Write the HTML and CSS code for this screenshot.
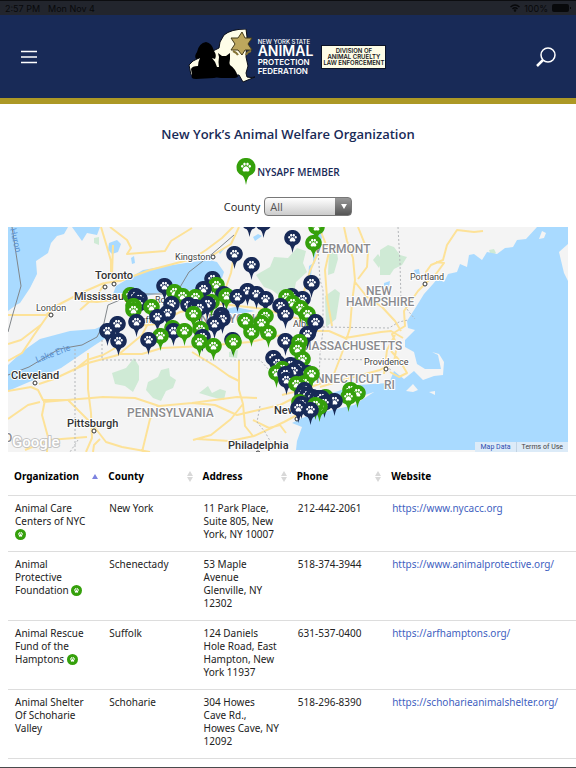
FILE: index.html
```html
<!DOCTYPE html>
<html lang="en">
<head>
    <meta charset="UTF-8">
    <meta name="viewport" content="width=device-width, initial-scale=1.0">
    <title>New York's Animal Welfare Organization</title>
    <link rel="stylesheet" href="styles.css">
</head>
<body>
    <!-- shared shapes -->
    <svg class="sprite" aria-hidden="true">
        <symbol id="paw" viewBox="0 0 12 11">
            <ellipse cx="1.7" cy="4.6" rx="1.3" ry="1.7"/>
            <ellipse cx="4.3" cy="2" rx="1.4" ry="1.9"/>
            <ellipse cx="7.7" cy="2" rx="1.4" ry="1.9"/>
            <ellipse cx="10.3" cy="4.6" rx="1.3" ry="1.7"/>
            <path d="M6 4.6C4 4.6 2.2 7.2 2.2 9c0 1.500 2 1.700 3.800 1.100C7.800 10.700 9.800 10.500 9.800 9 9.800 7.200 8 4.600 6 4.600z"/>
        </symbol>
        <symbol id="pin" viewBox="0 0 18 26">
            <path d="M9 0a8.500 8.500 0 0 1 3 16.600Q10 19 9 25Q8 19 6 16.600A8.500 8.500 0 0 1 9 0z"/>
            <use href="#paw" x="4" y="4" width="10" height="9" fill="#fff"/>
        </symbol>
        <symbol id="member" viewBox="0 0 12 12">
            <circle cx="6" cy="6" r="6" fill="#35a00b"/>
            <use href="#paw" x="3" y="3" width="6" height="6" fill="#fff"/>
        </symbol>
    </svg>

    <div class="screen">
        <div class="status-bar">
            <span>2:57 PM</span>
            <span>Mon Nov 4</span>
            <span class="status-right">
                <svg width="10" height="8" viewBox="0 0 20 16" fill="none" stroke="#08090b" stroke-width="3">
                    <path d="M1 6Q10-2 19 6M5 10Q10 5 15 10"/>
                    <circle cx="10" cy="13" r="1"/>
                </svg>
                100%
                <svg width="19" height="8" viewBox="0 0 19 8" fill="#08090b">
                    <rect width="17" height="8" rx="2"/>
                    <rect x="18" y="3" width="1" height="2"/>
                </svg>
            </span>
        </div>

        <header class="header">
            <button type="button" class="icon-btn" aria-label="Menu">
                <svg width="18" height="14" viewBox="0 0 18 14" stroke="#fff" stroke-width="1.700">
                    <path d="M1 1.500h16M1 7h16M1 12.500h16"/>
                </svg>
            </button>

            <a href="#" class="logo">
                <svg class="logo-art" width="67" height="55" viewBox="0 0 67 55">
                    <path d="M1 36L5 32 31 19 32 13 36 6Q43 0 58 0L59 8 58 28 60 37 58 44 59 48Q63 49 67 48L55 53 51 46 3 46z" fill="#fefde8" stroke="#0a0d18" stroke-width="1"/>
                    <path d="M8 30Q6 27 9 23 11 14 18 13 24 14 26 22 29 26 27 30L24 29Q28 33 29 38L31 38Q30 33 31 28L30 24 34 27 38 27 42 24 42 30Q41 34 42 36 48 40 50 48L47 49 33 49Q28 48 26 49L8 50Q2 50 4 46L3 40Q4 37 10 37 10 33 12 29z" fill="#000"/>
                    <path d="M54 3L57 9 64 9 60 15 64 21 57 21 54 26 50 21 43 21 47 15 43 9 50 9z" fill="#bda75d" stroke="#453c1b" stroke-width="1"/>
                    <path d="M45 22q4 2 5 4M63 22q-4 1-5 4" fill="none" stroke="#857436" stroke-width="2"/>
                </svg>
                <span class="logo-name">
                    <span class="name-top">NEW YORK STATE</span>
                    <span class="name-big">ANIMAL</span>
                    <span class="name-mid">PROTECTION</span>
                    <span class="name-end">FEDERATION</span>
                </span>
                <span class="logo-box">DIVISION OF<br>ANIMAL CRUELTY<br>LAW ENFORCEMENT</span>
            </a>

            <button type="button" class="icon-btn" aria-label="Search">
                <svg width="20" height="20" viewBox="0 0 20 20" fill="none" stroke="#fff">
                    <circle cx="12" cy="8" r="7" stroke-width="1.500"/>
                    <path d="M7 13L1 19" stroke-width="2.500"/>
                </svg>
            </button>
        </header>

        <main>
            <h1>New York’s Animal Welfare Organization</h1>

            <div class="legend">
                <svg width="20" height="28" viewBox="0 0 18 26" fill="#35a00b"><use href="#pin" width="18" height="26"/></svg>
                <span>NYSAPF MEMBER</span>
            </div>

            <form class="filter">
                <label for="county">County</label>
                <span class="select-wrap">
                    <select id="county">
                        <option>All</option>
                        <option>New York</option>
                        <option>Schenectady</option>
                        <option>Schoharie</option>
                        <option>Suffolk</option>
                    </select>
                </span>
            </form>

            <div class="map">
                <svg viewBox="8 227 560 225" role="img" aria-label="Map of organizations">
                    <rect x="8" y="227" width="560" height="225" fill="#f4f4f4"/>

                    <!-- parks -->
                    <g fill="#cfead5">
                        <path d="M112 373l14-5 8-10 5 8v14l-6 12-8-6-10-2z"/>
                        <path d="M148 382l10-5 3-7 8-2 1 8 6 4-3 8-7 3-5 10-8-3-7-8z"/>
                        <path d="M256 275l14-8 4-10 14 1 9-10 9 3-3 12 4 9-11 10-2 11-13 4-9-7-8-3z"/>
                        <path d="M329 250l7-5 2 14-4 14-6 2zM325 296l10-7 5 4-4 26-10 8zM373 260l5-6 4 6-3 8z"/>
                        <path d="M380 250l8-5 6 2 6 8 7 2-5 8-8 4-4 6h-10z"/>
                        <path d="M94 238l5-1v8l-5-2zM199 393l9-7 4 7 8-4 6 2-2 9-12-3zM229 352l9-2-1 8-8-1zM489 250l5-1 2 4-5 3z"/>
                    </g>

                    <!-- water -->
                    <g fill="#a9daff">
                        <path d="M8 227h60l-4 7-7 2-6 7-3 10-12 8 1 13-7 14-10 15-4 2-8 6z"/>
                        <path d="M72 227l10 14 5-8 10 2 3-8zM109 243l8-3 4 4-3 8-6 2-4-4zM131 258l3-2 1 7-3 1z"/>
                        <path d="M113 294l3-8 15-9 12-7 23-4 26-4 17-2 8 2 7 10-2 6-10-1-9 13-37 1-23 6-21 4z"/>
                        <path d="M8 365l15-14 17-12 30-8 25-2 16-7 5 5-7 9-14 9-34 23-25 11-28 12z"/>
                        <path d="M537 227l-11 12-9 1-4 7-8 1-8 6-10-2-5 8-8-6-5 1-2 12-7-3-3 8-9 2-4 8-7-3-4 5-9 10-8 13-9 14 1 7 7 2-10 10v7l9 5 3 12 8 5h16l-3-14-6-3 7 2 5 8-1 13-9 1-11 4-9-9-10 8-10-8-5 12-32 2-25 8-10 10-18 8 40-9 30-10-20 13-39 9-13 4-10 5 10 4-5 14-1 9h275V227z"/>
                        <path d="M312 227h12l-3 15-5 6-1 16-2-2 1-20zM309 266l3-2-1 14-3 1zM222 310l13-3 20 4-16 3-12-1zM253 237l5-3 4 2-7 5zM218 251l7-3-5 6zM384 283l6-2-1 6-5-1zM414 270l5-1 1 6-4 1z"/>
                    </g>
                    <path d="M406 391l7-7 5 6-5 2zM429 392l6-1v4zM559 252l9-8v37l-4-8zM539 239l3-8 4 2-2 5z" fill="#f4f4f4"/>

                    <!-- roads -->
                    <g class="road-edge">
                        <path d="M101 227l6 20 4 14v17l9 3 30-11 42-11 14-9 16-12 12-12M80 310l18-16 7-11 14-2M8 315h38l12-10 23-12 23-10M81 301l16 1 16-2M48 315l-14 20-12 18-14 8M42 324l-21 16-13 4M113 245l-1 30"/>
                        <path d="M110 227l17 13 4 8-4 6 38-3 6-10 21-13M213 255l18-11 8-17M234 255l-3 18-5 14-4 14M138 326l18-2 24-12 42-8 42 5 35 10 16 4M150 320l-8 15-24 20-30 8-34 16-15 5M117 347l-14 8-16 5-14 11M88 353v36l3 24 1 25-6 14M120 354h22l20-6 42-2 46-4 36-8M318 253l-8 18-7 24 2 31 1 16-3 22-4 28"/>
                        <path d="M8 391l23-4 7 3 5 10h25l10 10 14 14 14 18 16 5 28 5M45 400l-3 15 6 22-1 15M43 402l60-5 32 1 24 8 33-3 45-6 20 1M192 403l23 2 22 10 17-4 26-6 24-12M8 419l20-14 12-3M87 437l-38 3-24 10M100 439l-6 6-1 7M142 452l8-33 8-13M193 440l18-5 20-16 12-15M197 439l33 2 24-5 30-14 15-8M239 360v30l4 14 2 22 8 10M192 352l23 14 14 10 10 5M253 420l16 8 11-3 6 8"/>
                        <path d="M319 227l10 25-4 18 2 28 5 28M344 227l3 14 6 17 2 22-3 22-2 26-8 25-10 26-26 10-24 6M358 227l10 25-1 15-9 12M355 282l12 15 15 10 13 14 6 10M307 331h22l16 7 36-6 10-1 12 7M320 387l30-9 30-8 14-8 3-17-5-11 13-8-1-15 14-20 10-10-2-9 5-7 12-5 4-15 10-15 17 2 9-1M436 262l8 1-8 11-9 8M384 374l3-24 8-15M391 351l9 10 7 12-8 4-9-5"/>
                    </g>

                    <!-- borders -->
                    <path d="M12 227l9 59-9 31-4 15M8 375l21-8 30-18 23-4 15-8 7-14 4-18 26-11h42l13-22 23-18 22-19" fill="none" stroke="#81868a" stroke-width="1"/>
                    <path d="M75 349v103M102 340v20h158l10 11 23 16 17 10M318 250l2 30 3 10v40l-3 24-1 29M398 227l2 36 1 37 8 12 6 7M323 327l66 1 10-6 9-2M320 359l58 1 13 10M260 406l-3 16 8 10 8 14M78 440l-8 12" fill="none" stroke="#b4b7ba" stroke-width="1" stroke-dasharray="2 2"/>

                    <!-- place names -->
                    <g class="water-name">
                        <text x="10" y="229" transform="rotate(77 10 229)">Huron</text>
                        <text x="37" y="363" transform="rotate(-21 37 363)">Lake Erie</text>
                    </g>
                    <g class="state-name">
                        <text x="314" y="253">VERMONT</text>
                        <text x="366" y="295">NEW</text>
                        <text x="346" y="306">HAMPSHIRE</text>
                        <text x="301" y="350">MASSACHUSETTS</text>
                        <text x="300" y="383">CONNECTICUT</text>
                        <text x="384" y="389">RI</text>
                        <text x="200" y="323">NEW YORK</text>
                        <text x="127" y="417">PENNSYLVANIA</text>
                    </g>
                    <g class="town-name">
                        <text x="36" y="311">London</text>
                        <text x="175" y="260">Kingston</text>
                        <text x="410" y="280">Portland</text>
                        <text x="364" y="365">Providence</text>
                        <text x="293" y="327">Albany</text>
                        <text x="155" y="303">Rochester</text>
                        <text x="135" y="323">Buffalo</text>
                    </g>
                    <g class="city-name">
                        <text x="95" y="279">Toronto</text>
                        <text x="74" y="300">Mississauga</text>
                        <text x="11" y="379">Cleveland</text>
                        <text x="67" y="427">Pittsburgh</text>
                        <text x="228" y="449">Philadelphia</text>
                        <text x="274" y="414">New York</text>
                        <text x="4" y="442" class="state-name">O</text>
                    </g>
                    <g class="dot">
                        <circle cx="114" cy="284" r="2"/>
                        <circle cx="105" cy="287" r="2"/>
                        <circle cx="51" cy="315" r="2"/>
                        <circle cx="213" cy="257" r="2"/>
                        <circle cx="425" cy="284" r="2"/>
                        <circle cx="386" cy="369" r="2"/>
                        <circle cx="35" cy="383" r="2"/>
                        <circle cx="94" cy="431" r="2"/>
                        <circle cx="297" cy="419" r="2"/>
                        <circle cx="258" cy="453" r="2"/>
                    </g>

                    <g id="pins"></g>
                    <text x="12" y="447" class="google">Google</text>
                </svg>
                <div class="map-links">
                    <a href="#" class="map-data">Map Data</a>
                    <a href="#">Terms of Use</a>
                </div>
            </div>

            <table>
                <colgroup>
                    <col class="col"><col class="col"><col class="col"><col class="col"><col>
                </colgroup>
                <thead>
                    <tr>
                        <th><div class="th">Organization <span class="sort asc"></span></div></th>
                        <th><div class="th">County <span class="sort"></span></div></th>
                        <th><div class="th">Address <span class="sort"></span></div></th>
                        <th><div class="th">Phone <span class="sort"></span></div></th>
                        <th><div class="th">Website</div></th>
                    </tr>
                </thead>
                <tbody>
                    <tr>
                        <td>Animal Care Centers of NYC <svg class="member"><use href="#member"/></svg></td>
                        <td>New York</td>
                        <td>11 Park Place, Suite 805, New York, NY 10007</td>
                        <td>212-442-2061</td>
                        <td><a href="https://www.nycacc.org">https://www.nycacc.org</a></td>
                    </tr>
                    <tr>
                        <td>Animal Protective Foundation <svg class="member"><use href="#member"/></svg></td>
                        <td>Schenectady</td>
                        <td>53 Maple Avenue<br>Glenville, NY 12302</td>
                        <td>518-374-3944</td>
                        <td><a href="https://www.animalprotective.org/">https://www.animalprotective.org/</a></td>
                    </tr>
                    <tr>
                        <td>Animal Rescue Fund of the Hamptons <svg class="member"><use href="#member"/></svg></td>
                        <td>Suffolk</td>
                        <td>124 Daniels<br>Hole Road, East Hampton, New York 11937</td>
                        <td>631-537-0400</td>
                        <td><a href="https://arfhamptons.org/">https://arfhamptons.org/</a></td>
                    </tr>
                    <tr>
                        <td>Animal Shelter Of Schoharie Valley</td>
                        <td>Schoharie</td>
                        <td>304 Howes<br>Cave Rd.,<br>Howes Cave, NY 12092</td>
                        <td>518-296-8390</td>
                        <td><a href="https://schoharieanimalshelter.org/">https://schoharieanimalshelter.org/</a></td>
                    </tr>
                    <tr>
                        <td>Animal Welfare</td>
                        <td>Westchester</td>
                        <td>110 Meadow</td>
                        <td>914-243-0024</td>
                        <td><a href="#">https://www.animalwelfare.org/</a></td>
                    </tr>
                </tbody>
            </table>
        </main>
    </div>

    <script>
        // [x, y, type] head of each pin, n = organization, g = NYSAPF member
        const pins = [
            [249, 222, 'n'], [263, 223, 'n'], [316, 227, 'g'], [292, 238, 'n'], [313, 243, 'g'],
            [234, 254, 'n'], [251, 265, 'n'], [212, 279, 'n'], [311, 283, 'n'], [216, 285, 'g'],
            [164, 286, 'n'], [203, 289, 'n'], [247, 291, 'n'], [174, 292, 'g'], [223, 294, 'n'],
            [256, 294, 'n'], [130, 295, 'g'], [135, 296, 'n'], [182, 296, 'g'], [291, 296, 'n'],
            [226, 296, 'g'], [237, 297, 'n'], [195, 297, 'g'], [286, 297, 'g'], [139, 299, 'n'],
            [265, 299, 'n'], [302, 299, 'n'], [211, 302, 'g'], [292, 303, 'g'], [138, 304, 'n'],
            [171, 304, 'n'], [188, 305, 'n'], [207, 304, 'n'], [133, 306, 'g'], [280, 306, 'n'],
            [151, 307, 'g'], [195, 307, 'n'], [199, 308, 'n'], [300, 308, 'g'], [133, 310, 'g'],
            [167, 313, 'n'], [193, 314, 'g'], [285, 314, 'n'], [307, 314, 'g'], [221, 315, 'n'],
            [265, 316, 'g'], [157, 317, 'n'], [222, 319, 'n'], [245, 321, 'g'], [136, 322, 'n'],
            [315, 322, 'n'], [261, 323, 'g'], [117, 324, 'n'], [214, 324, 'n'], [172, 328, 'g'],
            [200, 329, 'g'], [107, 331, 'n'], [173, 331, 'n'], [184, 331, 'g'], [251, 332, 'g'],
            [268, 333, 'g'], [307, 334, 'n'], [160, 336, 'g'], [202, 337, 'n'], [148, 340, 'n'],
            [232, 340, 'n'], [285, 341, 'n'], [118, 341, 'n'], [199, 342, 'g'], [233, 342, 'g'],
            [299, 342, 'g'], [213, 346, 'g'], [297, 349, 'g'], [273, 358, 'n'], [302, 359, 'g'],
            [277, 363, 'n'], [290, 365, 'n'], [297, 368, 'n'], [282, 369, 'g'], [293, 371, 'n'],
            [276, 373, 'g'], [307, 373, 'n'], [285, 374, 'n'], [311, 374, 'g'], [286, 380, 'n'],
            [304, 383, 'g'], [296, 384, 'g'], [304, 390, 'n'], [350, 390, 'g'], [357, 393, 'g'],
            [302, 394, 'n'], [307, 395, 'n'], [312, 397, 'n'], [317, 398, 'n'], [325, 397, 'g'],
            [321, 398, 'n'], [348, 397, 'g'], [334, 401, 'n'], [299, 402, 'g'], [324, 403, 'n'],
            [301, 404, 'n'], [319, 407, 'g'], [315, 405, 'g'], [298, 408, 'n'], [310, 410, 'n']
        ];

        const layer = document.getElementById('pins');
        pins.forEach(([x, y, type]) => {
            const pin = document.createElementNS('http://www.w3.org/2000/svg', 'use');
            pin.setAttribute('href', '#pin');
            pin.setAttribute('x', x - 8);
            pin.setAttribute('y', y - 8);
            pin.setAttribute('width', 17);
            pin.setAttribute('height', 24);
            pin.setAttribute('class', type === 'g' ? 'pin-member' : 'pin-org');
            layer.appendChild(pin);
        });
    </script>
</body>
</html>
```
FILE: styles.css
```css
* {
    box-sizing: border-box;
}
body {
    margin: 0;
    font-family: "Open Sans", sans-serif;
    font-size: 10px;
    line-height: 13px;
    color: #222;
    background: #fff;
}
.sprite {
    position: absolute;
    width: 0;
    height: 0;
}
.screen {
    height: 100vh;
    overflow: hidden;
    border-bottom: 1px solid #4a4a4c;
}

/* status bar */
.status-bar {
    display: flex;
    align-items: center;
    gap: 8px;
    height: 15px;
    padding: 0 5px;
    border-top: 1px solid #0c0d10;
    background: #22252d;
    color: #08090b;
    font-family: Inter, sans-serif;
    font-size: 9px;
}
.status-right {
    display: flex;
    align-items: center;
    gap: 4px;
    margin-left: auto;
}

/* header */
.header {
    display: flex;
    align-items: center;
    justify-content: space-between;
    height: 89px;
    padding: 0 20px;
    background: #182a57;
    border-bottom: 6px solid #ac9825;
}
.icon-btn {
    display: flex;
    padding: 0;
    border: none;
    background: none;
    cursor: pointer;
}
.logo {
    display: flex;
    align-items: center;
    color: #fff;
    text-decoration: none;
    font-family: Inter, sans-serif;
}
.logo-name {
    display: flex;
    flex-direction: column;
    margin: 0 8px 0 3px;
    font-weight: 600;
    white-space: nowrap;
}
.name-top {
    font-size: 6px;
    font-weight: 500;
    line-height: 7px;
}
.name-big {
    font-size: 14px;
    line-height: 12px;
}
.name-mid {
    font-size: 8px;
    line-height: 10px;
}
.name-end {
    font-size: 8px;
    line-height: 9px;
}
.logo-box {
    padding: 2px 1px;
    border: 1px solid #0b1226;
    background: #fdfce6;
    color: #15161a;
    font-size: 6px;
    font-weight: 600;
    line-height: 6px;
    text-align: center;
    white-space: nowrap;
}

/* intro */
h1 {
    margin: 21px 0 15px;
    font-size: 13px;
    line-height: 18px;
    font-weight: 600;
    text-align: center;
    color: #182a57;
}
.legend {
    display: flex;
    align-items: center;
    justify-content: center;
    gap: 1px;
    height: 28px;
    color: #182a57;
    font-weight: 600;
}
.filter {
    display: flex;
    align-items: center;
    justify-content: center;
    gap: 4px;
    margin: 11px 0;
    font-size: 11px;
}
.select-wrap {
    position: relative;
    width: 88px;
}
.select-wrap::after {
    content: "";
    position: absolute;
    top: 7px;
    right: 5px;
    border: 3px solid transparent;
    border-top: 5px solid #fff;
    border-bottom: none;
    pointer-events: none;
}
select {
    display: block;
    width: 100%;
    height: 19px;
    padding: 0 5px;
    border: 1px solid #777;
    border-radius: 4px;
    appearance: none;
    background: linear-gradient(#999, #555) right / 16px 100% no-repeat, linear-gradient(#fff, #ccc);
    color: #555;
    font-family: inherit;
    font-size: 11px;
}

/* map */
.map {
    position: relative;
    margin: 0 8px;
    font-family: Roboto, sans-serif;
}
.map > svg {
    display: block;
    width: 100%;
}
.road-edge {
    fill: none;
    stroke: #fde298;
    stroke-width: 2;
    stroke-linejoin: round;
}
.map text {
    paint-order: stroke;
    stroke: #fff;
    stroke-width: 2px;
    stroke-linejoin: round;
}
.city-name {
    font-size: 11px;
    font-weight: 500;
    fill: #333;
}
.town-name {
    font-size: 9px;
    fill: #444;
}
.state-name {
    font-size: 12px;
    font-weight: 500;
    fill: #8a8a8e;
}
.map .water-name text {
    font-size: 9px;
    fill: #5a93d4;
    stroke: none;
}
.dot circle {
    fill: #fff;
    stroke: #333;
    stroke-width: 1;
}
.pin-org {
    fill: #182a57;
}
.pin-member {
    fill: #35a00b;
}
.map .google {
    font-size: 15px;
    font-weight: 500;
    fill: #fff;
    stroke: #c4c4c4;
}
.map-links {
    position: absolute;
    right: 0;
    bottom: 0;
    display: flex;
    font-size: 7px;
    line-height: 10px;
    background: #dcebf8;
}
.map-links a {
    padding: 0 5px;
    color: #444;
    text-decoration: none;
}
.map-links .map-data {
    border-right: 1px solid #c2d4e4;
    color: #2b4bb0;
}

/* table */
table {
    width: calc(100% - 8px);
    margin-left: 8px;
    border-collapse: collapse;
    table-layout: fixed;
    font-family: "Noto Sans", sans-serif;
}
.col {
    width: 16.6%;
}
th {
    height: 43px;
    padding: 7px 4px 0 6px;
    border-bottom: 1px solid #ddd;
    text-align: left;
    color: #000;
}
.th {
    display: flex;
    align-items: center;
    justify-content: space-between;
}
.sort {
    display: flex;
    flex-direction: column;
    gap: 1px;
}
.sort::before,
.sort::after {
    content: "";
    border: 3px solid transparent;
}
.sort::before {
    border-top: none;
    border-bottom: 5px solid #d8d8d8;
}
.sort::after {
    border-bottom: none;
    border-top: 5px solid #d8d8d8;
}
.asc::before {
    border-bottom-color: #7d83e0;
}
.asc::after {
    display: none;
}
td {
    padding: 6px 8px 10px 7px;
    border-bottom: 1px solid #ddd;
    vertical-align: top;
}
td:last-child {
    padding-right: 0;
}
td a {
    color: #3f5fbf;
    text-decoration: none;
}
.member {
    width: 11px;
    height: 11px;
    vertical-align: -2px;
}
```
